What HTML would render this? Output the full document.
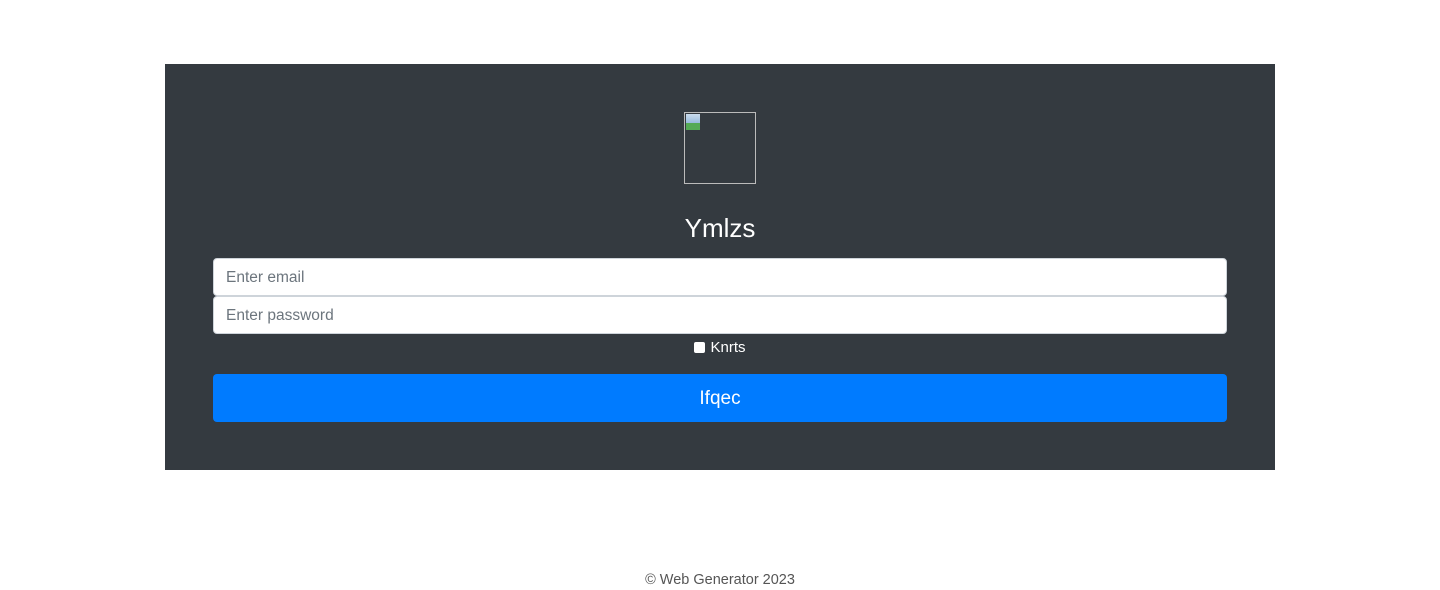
<!DOCTYPE html>
<html><head><style>
body{margin:0;background:#fff;font-family:"Liberation Sans",sans-serif;width:1440px;height:590px;position:relative;overflow:hidden}
.panel{position:absolute;left:165px;top:64px;width:1110px;height:406px;background:#343a40}
.img{position:absolute;left:519px;top:48px;width:70px;height:70px;border:1px solid #bbb}
.img i{position:absolute;left:1px;top:1px;width:14px;height:16px;background:linear-gradient(#cde 0,#9bd 55%,#5a5 55%);}
h1{position:absolute;left:0;right:0;top:146px;margin:0;text-align:center;color:#fff;font-weight:400;font-size:26px;line-height:36px}
.in{position:absolute;left:48px;height:36px;background:#fff;border:1px solid #ced4da;border-radius:4px;color:#6c757d;font-size:15.5px;line-height:38px;padding-left:12px;width:1000px}
.cb{position:absolute;left:0;right:0;top:274px;text-align:center;color:#fff;font-size:15px;line-height:20px}
.cb span{display:inline-block;width:11px;height:11px;background:#fff;border-radius:2px;margin-right:5px;vertical-align:-1px}
.btn{position:absolute;left:48px;top:310px;width:1014px;height:48px;background:#007bff;border-radius:4px;color:#fff;text-align:center;line-height:50px;font-size:19px}
.ft{position:absolute;left:0;right:0;top:570px;text-align:center;color:#555;font-size:14.5px;line-height:20px}
</style></head><body>
<div class="panel">
<div class="img"><i></i></div>
<h1>Ymlzs</h1>
<div class="in" style="top:194px">Enter email</div>
<div class="in" style="top:232px">Enter password</div>
<div class="cb"><span></span>Knrts</div>
<div class="btn">Ifqec</div>
</div>
<div class="ft">© Web Generator 2023</div>
</body></html>
